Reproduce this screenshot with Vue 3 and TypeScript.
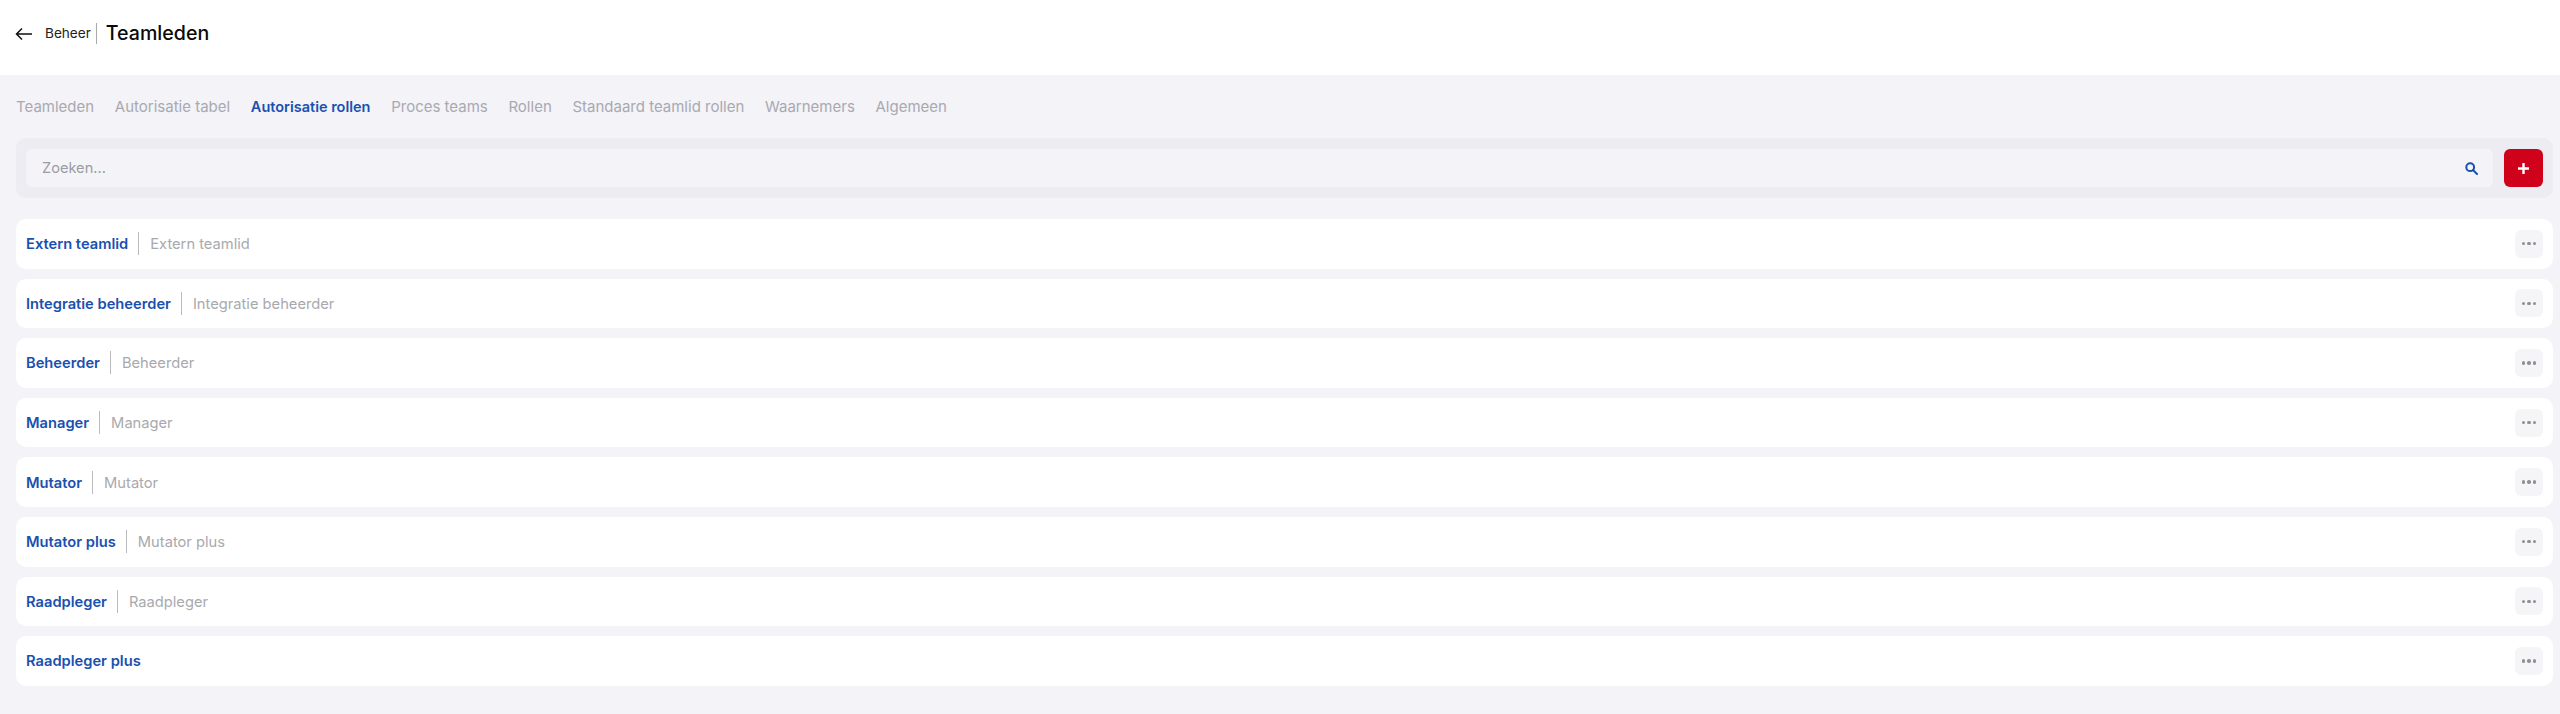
<script setup lang="ts">
const tabs: string[] = ['Teamleden', 'Autorisatie tabel', 'Autorisatie rollen', 'Proces teams', 'Rollen', 'Standaard teamlid rollen', 'Waarnemers', 'Algemeen']
const activeTab = 'Autorisatie rollen'
const roles: { name: string; description: string }[] = [
  { name: 'Extern teamlid', description: 'Extern teamlid' },
  { name: 'Integratie beheerder', description: 'Integratie beheerder' },
  { name: 'Beheerder', description: 'Beheerder' },
  { name: 'Manager', description: 'Manager' },
  { name: 'Mutator', description: 'Mutator' },
  { name: 'Mutator plus', description: 'Mutator plus' },
  { name: 'Raadpleger', description: 'Raadpleger' },
  { name: 'Raadpleger plus', description: '' },
]
</script>

<template>
  <div class="page">
    <header class="top">
      <svg class="back" width="18" height="14" viewBox="0 0 18 14" fill="none" stroke="#111" stroke-width="1.5">
        <path d="M17 7H1.5M7 1.5 1.5 7 7 12.5" />
      </svg>
      <span class="crumb">Beheer</span>
      <span class="title">Teamleden</span>
    </header>
    <main class="content">
      <nav class="tabs">
        <span v-for="tab in tabs" :key="tab" class="tab" :class="{ active: tab === activeTab }">{{ tab }}</span>
      </nav>
      <div class="toolbar">
        <div class="search">
          <span class="placeholder">Zoeken...</span>
          <svg width="13" height="13" viewBox="0 0 13 13" fill="none" stroke="#1a50b0" stroke-width="2">
            <circle cx="5.2" cy="5.2" r="3.9" />
            <path d="M8 8l4 4" stroke-linecap="round" />
          </svg>
        </div>
        <button class="add">
          <svg width="13" height="13" viewBox="0 0 13 13" stroke="#fff" stroke-width="2.4" fill="none"><path d="M6.5 1v11M1 6.5h11" /></svg>
        </button>
      </div>
      <div class="rows">
        <div v-for="role in roles" :key="role.name" class="row">
          <span class="name">{{ role.name }}</span>
          <span v-if="role.description" class="desc">{{ role.description }}</span>
          <span class="more"><i></i><i></i><i></i></span>
        </div>
      </div>
    </main>
  </div>
</template>

<style>
html, body { margin: 0; background: #f3f3f8; }
</style>

<style scoped>
.page {
  height: 714px;
  display: flex;
  flex-direction: column;
  font-family: "Inter", "Liberation Sans", sans-serif;
  overflow: hidden;
}
.top {
  height: 75px;
  background: #fff;
  display: flex;
  align-items: center;
  padding-left: 15px;
  padding-bottom: 9px;
  box-sizing: border-box;
  flex: none;
}
.back { margin-right: 12px; margin-top: 2px; }
.crumb {
  font-size: 13.6px;
  color: #222;
  padding-right: 5px;
  border-right: 1px solid #aaa;
  line-height: 21px;
}
.title {
  font-size: 19.6px;
  font-weight: 500;
  color: #0a0a0a;
  margin-left: 9px;
}
.content {
  flex: 1;
  padding: 0 7px 0 16px;
  display: flex;
  flex-direction: column;
}
.tabs {
  height: 63px;
  display: flex;
  align-items: center;
  gap: 20.7px;
  font-size: 15px;
  flex: none;
}
.tab { color: #a9a9b1; }
.tab.active { color: #1a50b0; font-weight: 600; font-size: 14.5px; }
.toolbar {
  height: 60px;
  background: #ececf2;
  border-radius: 10px;
  padding: 11px 10px;
  display: flex;
  gap: 11px;
  box-sizing: border-box;
  flex: none;
}
.search {
  flex: 1;
  height: 38px;
  background: #f3f3f8;
  border-radius: 6px;
  display: flex;
  align-items: center;
  justify-content: space-between;
  padding: 0 15px 0 16px;
  box-sizing: border-box;
}
.placeholder { font-size: 14.6px; color: #9c9ca3; }
.add {
  width: 39px;
  height: 38px;
  background: #d0021b;
  border: 0;
  border-radius: 6px;
  padding: 0;
  display: flex;
  align-items: center;
  justify-content: center;
}
.rows {
  margin-top: 21px;
  display: flex;
  flex-direction: column;
  gap: 10px;
}
.row {
  height: 49.6px;
  background: #fff;
  border-radius: 10px;
  display: flex;
  align-items: center;
  padding: 0 10px;
  box-sizing: border-box;
}
.name { font-size: 14.7px; line-height: 22px; padding-top: 1px; font-weight: 600; color: #1a50b0; }
.desc {
  font-size: 14.7px;
  color: #a9a9ad;
  margin-left: 10px;
  padding-left: 11px;
  border-left: 1px solid #bbb;
  line-height: 22px;
  padding-top: 1px;
}
.more {
  margin-left: auto;
  width: 28px;
  height: 28px;
  background: #f5f5f7;
  border-radius: 6px;
  display: flex;
  align-items: center;
  justify-content: center;
  gap: 2px;
}
.more i {
  width: 3.4px;
  height: 3.4px;
  background: #8f8f96;
  border-radius: 50%;
}
</style>
